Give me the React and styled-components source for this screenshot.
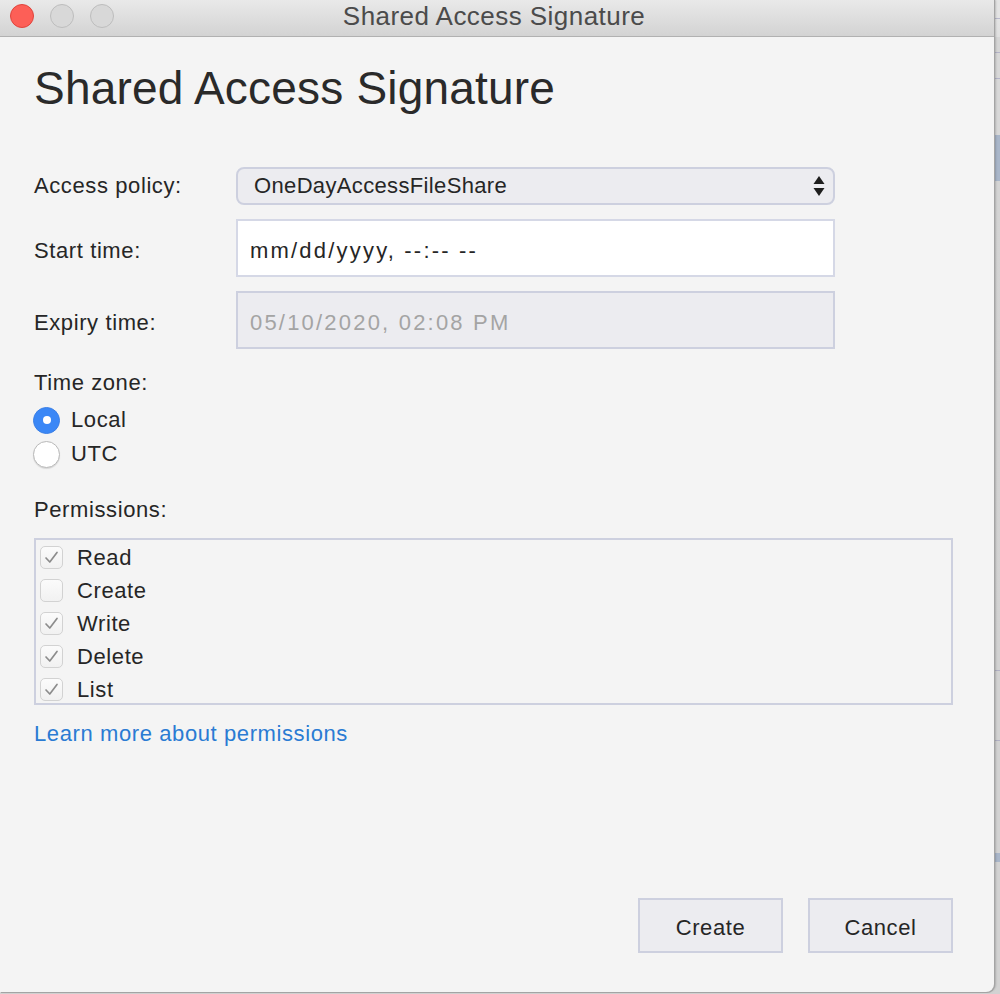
import React from "react";
import styled, { createGlobalStyle } from "styled-components";

const Global = createGlobalStyle`
  html, body { margin: 0; padding: 0; background: #d2d2d2; }
  body { font-family: "Liberation Sans", Arial, Helvetica, sans-serif; color: #222; }
  * { box-sizing: border-box; }
`;

const Screen = styled.div`
  display: flex;
  width: 1000px;
  height: 994px;
  overflow: hidden;
  background: #d2d2d2;
`;

const Window = styled.div`
  flex: none;
  width: 994px;
  height: 992px;
  display: flex;
  flex-direction: column;
  background: #f4f4f4;
  border-bottom-right-radius: 8px;
  box-shadow: 1px 0 0 #a4a4a4, 1px 1px 0 #a4a4a4, 2px 0 2px rgba(0, 0, 0, 0.18);
  overflow: hidden;
  position: relative;
  z-index: 1;
`;

const Backdrop = styled.div`
  flex: 1;
  background: linear-gradient(
    to bottom,
    #e4e4e4 0px, #e4e4e4 18px, #b9b9cc 18px, #b9b9cc 19px, #e4e4e4 19px,
    #e0e0e0 37px, #d6d6d6 37px, #d6d6d6 52px, #b4b4c8 52px, #b4b4c8 53px,
    #d8d8d8 53px, #d8d8d8 78px, #b4b4c8 78px, #b4b4c8 79px, #d8d8d8 79px,
    #d8d8d8 135px, #a9b6c9 135px, #a9b6c9 181px, #d4d4d4 181px,
    #d2d2d2 670px, #b1b1c4 670px, #b1b1c4 671px, #d2d2d2 671px,
    #d2d2d2 740px, #b1b1c4 740px, #b1b1c4 741px, #d2d2d2 741px,
    #d2d2d2 853px, #a9b6c9 853px, #a9b6c9 862px, #d2d2d2 862px
  );
`;

const TitleBar = styled.div`
  flex: none;
  height: 37px;
  display: grid;
  grid-template-columns: 1fr auto 1fr;
  align-items: center;
  padding: 0 10px;
  background: linear-gradient(to bottom, #e9e9e9, #d3d3d3);
  border-bottom: 1px solid #b1b1b1;
`;

const Lights = styled.div`
  display: flex;
  gap: 16px;
  align-items: center;
  margin-top: -5px;
`;

const Light = styled.span`
  width: 24px;
  height: 24px;
  border-radius: 50%;
  background: ${(p) => (p.$red ? "#fd5f57" : "#d8d8d8")};
  border: 1px solid ${(p) => (p.$red ? "#e0443c" : "#bdbdbd")};
`;

const Title = styled.div`
  font-size: 26px;
  letter-spacing: 0.45px;
  color: #4b4b4b;
  margin-top: -3px;
  margin-right: 6px;
`;

const Body = styled.div`
  flex: 1;
  display: flex;
  flex-direction: column;
  padding: 28px 41px 39px 34px;
`;

const Heading = styled.h1`
  margin: 0;
  font-size: 46px;
  line-height: 46px;
  font-weight: 400;
  letter-spacing: 0.2px;
  color: #2a2a2a;
`;

const Form = styled.div`
  margin-top: 56px;
  display: grid;
  grid-template-columns: 202px 599px;
  grid-auto-rows: auto;
  row-gap: 14px;
  align-items: center;
`;

const Label = styled.div`
  font-size: 22px;
  letter-spacing: 0.6px;
  line-height: 26px;
  color: #262626;
  margin-top: ${(p) => p.$mt || 0}px;
  padding-top: ${(p) => p.$pt || 0}px;
`;

const Select = styled.div`
  height: 38px;
  display: flex;
  align-items: center;
  justify-content: space-between;
  padding: 0 8px 0 16px;
  background: #ececf0;
  border: 2px solid #cdd0df;
  border-radius: 8px;
  font-size: 22px;
  letter-spacing: 0.35px;
  color: #262626;
`;

const Field = styled.input`
  height: ${(p) => p.$h}px;
  width: 100%;
  padding: 5px 12px 0;
  border: 2px solid ${(p) => (p.disabled ? "#cdd0df" : "#d5d8e6")};
  background: ${(p) => (p.disabled ? "#ececf0" : "#ffffff")};
  font-family: "Liberation Sans", Arial, sans-serif;
  font-size: 22px;
  letter-spacing: 2.2px;
  color: #262626;
  outline: none;
  border-radius: 0;
  &:disabled {
    color: #a4a4a4;
    -webkit-text-fill-color: #a4a4a4;
    opacity: 1;
  }
`;

const RadioGroup = styled.div`
  display: flex;
  flex-direction: column;
  margin: 7px 0 0 -1px;
`;

const RadioRow = styled.label`
  height: 34px;
  display: flex;
  align-items: center;
  gap: 11px;
  font-size: 22px;
  letter-spacing: 0.6px;
  color: #262626;
`;

const Radio = styled.span`
  width: 27px;
  height: 27px;
  border-radius: 50%;
  flex: none;
  display: flex;
  align-items: center;
  justify-content: center;
  background: ${(p) => (p.$on ? "#3a87f6" : "#ffffff")};
  border: 1px solid ${(p) => (p.$on ? "#3a7fe6" : "#b9b9b9")};
  box-shadow: ${(p) => (p.$on ? "none" : "0 1px 1px rgba(0,0,0,0.12)")};
  &::after {
    content: "";
    display: ${(p) => (p.$on ? "block" : "none")};
    width: 8px;
    height: 8px;
    border-radius: 50%;
    background: #fff;
  }
`;

const PermBox = styled.div`
  margin-top: 15px;
  height: 167px;
  border: 2px solid #cdd0df;
  overflow: hidden;
  padding: 1px 0 0 4px;
  display: flex;
  flex-direction: column;
`;

const CheckRow = styled.label`
  flex: none;
  height: 33px;
  display: flex;
  align-items: center;
  gap: 14px;
  font-size: 22px;
  letter-spacing: 0.6px;
  color: #262626;
`;

const Check = styled.span`
  flex: none;
  width: 23px;
  height: 23px;
  border-radius: 5px;
  border: 1px solid #d2d2d2;
  background: linear-gradient(to bottom, #fbfbfb, #f1f1f1);
  display: flex;
  align-items: center;
  justify-content: center;
`;

const Link = styled.a`
  margin-top: 16px;
  font-size: 22px;
  letter-spacing: 0.6px;
  line-height: 26px;
  color: #2a7bd3;
  text-decoration: none;
  align-self: flex-start;
`;

const Footer = styled.div`
  margin-top: auto;
  display: flex;
  justify-content: flex-end;
  gap: 25px;
`;

const Button = styled.button`
  width: 145px;
  height: 55px;
  background: #ececf0;
  border: 2px solid #cdd0df;
  border-radius: 0;
  font-family: "Liberation Sans", Arial, sans-serif;
  font-size: 22px;
  letter-spacing: 0.6px;
  color: #262626;
  padding: 5px 0 0;
`;

const Arrows = () => (
  <svg width="12" height="22" viewBox="0 0 12 22">
    <path d="M6 1 L11.5 9 L0.5 9 Z" fill="#1e1e1e" />
    <path d="M0.5 13 L11.5 13 L6 21 Z" fill="#1e1e1e" />
  </svg>
);

const Tick = () => (
  <svg width="15" height="13" viewBox="0 0 15 13">
    <path d="M2 7 L5.8 11 L13 1.5" fill="none" stroke="#8c8c8c" strokeWidth="1.7" strokeLinecap="round" strokeLinejoin="round" />
  </svg>
);

const perms = [
  ["Read", true],
  ["Create", false],
  ["Write", true],
  ["Delete", true],
  ["List", true],
];

export default function App() {
  return (
    <Screen>
      <Global />
      <Window>
        <TitleBar>
          <Lights>
            <Light $red />
            <Light />
            <Light />
          </Lights>
          <Title>Shared Access Signature</Title>
          <span />
        </TitleBar>
        <Body>
          <Heading>Shared Access Signature</Heading>
          <Form>
            <Label>Access policy:</Label>
            <Select>
              <span>OneDayAccessFileShare</span>
              <Arrows />
            </Select>
            <Label $pt={6}>Start time:</Label>
            <Field $h={58} defaultValue="mm/dd/yyyy, --:-- --" />
            <Label $pt={6}>Expiry time:</Label>
            <Field $h={58} disabled defaultValue="05/10/2020, 02:08 PM" />
          </Form>
          <Label $mt={21}>Time zone:</Label>
          <RadioGroup>
            <RadioRow>
              <Radio $on />
              Local
            </RadioRow>
            <RadioRow>
              <Radio />
              UTC
            </RadioRow>
          </RadioGroup>
          <Label $mt={26}>Permissions:</Label>
          <PermBox>
            {perms.map(([name, on]) => (
              <CheckRow key={name}>
                <Check>{on && <Tick />}</Check>
                {name}
              </CheckRow>
            ))}
          </PermBox>
          <Link href="#">Learn more about permissions</Link>
          <Footer>
            <Button>Create</Button>
            <Button>Cancel</Button>
          </Footer>
        </Body>
      </Window>
      <Backdrop />
    </Screen>
  );
}
